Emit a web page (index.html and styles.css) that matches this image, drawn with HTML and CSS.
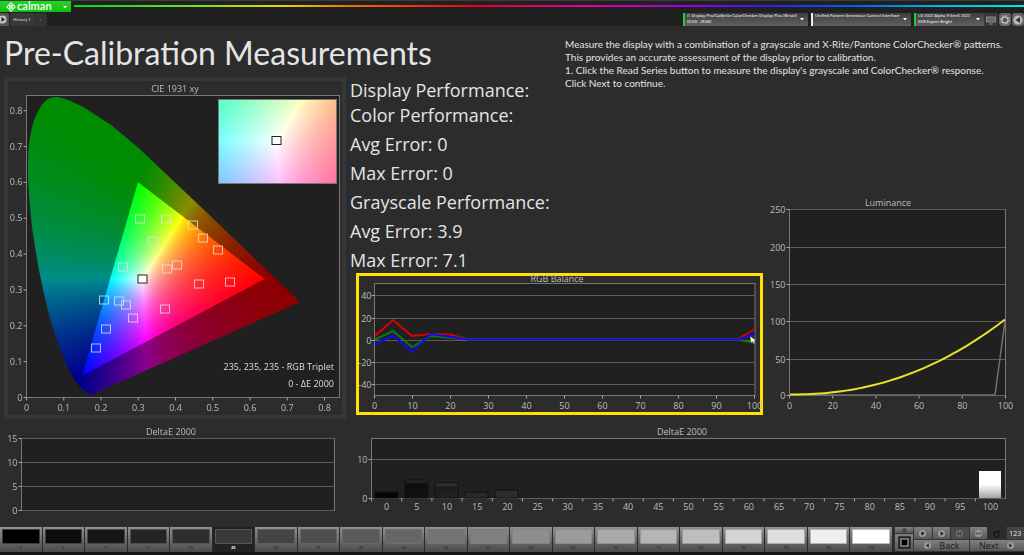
FILE: index.html
```html
<!DOCTYPE html>
<html lang="en">
<head>
<meta charset="utf-8">
<title>Calman - Pre-Calibration Measurements</title>
<link rel="stylesheet" href="styles.css">
</head>
<body>
<header class="topbar">
  <button class="brand" type="button" aria-label="calman menu">
    <svg class="brand-mark" viewBox="0 0 10 10" aria-hidden="true"><g transform="rotate(45 5 5)" fill="none" stroke="#e8ffe8" stroke-width="1"><rect x="2" y="2" width="2.5" height="2.5"/><rect x="5.5" y="2" width="2.5" height="2.5"/><rect x="2" y="5.5" width="2.5" height="2.5"/><rect x="5.5" y="5.5" width="2.5" height="2.5"/></g></svg>
    <span>calman</span>
    <svg class="arrow" viewBox="0 0 6 4" aria-hidden="true"><path d="M1 1h4L3 3.5z"/></svg>
  </button>
  <div class="rainbow"></div>
</header>
<nav class="toolbar">
  <button class="play" type="button" aria-label="Play"><svg viewBox="0 0 9 11"><circle cx="2.500" cy="5.500" r="4" fill="#c4c4c4"/><path d="M1.500 3v5L5 5.500z" fill="#222"/></svg></button>
  <button class="tab" type="button">History 1</button>
  <button class="tab tab-add" type="button" aria-label="Add tab">+</button>
  <div class="devices">
    <div class="device device-meter"><label for="meter">i1 Display Pro/Calibrite ColorChecker Display Plus (Retail)</label><select id="meter"><option>OLED - (RGB)</option></select><svg class="arrow" viewBox="0 0 6 4"><path d="M1 1h4L3 3.5z"/></svg></div>
    <div class="device device-source"><select aria-label="Pattern source"><option>Unified Pattern Generator Control Interface</option></select><svg class="arrow" viewBox="0 0 6 4"><path d="M1 1h4L3 3.5z"/></svg></div>
    <div class="device device-display"><label for="display">LG 2022 Alpha 9 Gen5 2022</label><select id="display"><option>SDR Expert Bright</option></select><svg class="arrow" viewBox="0 0 6 4"><path d="M1 1h4L3 3.5z"/></svg></div>
    <button class="tool tool-flat" type="button" aria-label="Screen"><svg viewBox="0 0 12 12"><rect x="1.500" y="3" width="9" height="5" fill="#666" stroke="#888"/><path d="M4 10h4" stroke="#888"/></svg></button>
    <button class="tool" type="button" aria-label="Settings"><svg viewBox="0 0 12 12"><circle cx="6" cy="6" r="3" fill="#555" stroke="#bbb" stroke-width="1.500"/><circle cx="6" cy="6" r="4.500" fill="none" stroke="#bbb" stroke-dasharray="1.500 2"/></svg></button>
    <button class="tool" type="button" aria-label="Previous"><svg viewBox="0 0 12 12"><circle cx="6" cy="6" r="4.500" fill="#bbb"/><path d="M8 3v6L3.500 6z" fill="#333"/></svg></button>
  </div>
</nav>
<main class="workspace">
  <h1 class="title">Pre-Calibration Measurements</h1>
  <div class="instructions">
    <p>Measure the display with a combination of a grayscale and X-Rite/Pantone ColorChecker® patterns.</p>
    <p>This provides an accurate assessment of the display prior to calibration.</p>
    <p>1. Click the Read Series button to measure the display's grayscale and ColorChecker® response.</p>
    <p>Click Next to continue.</p>
  </div>
  <section class="performance">
    <h2>Display Performance:</h2>
    <p>Color Performance:</p>
    <p>Avg Error: 0</p>
    <p>Max Error: 0</p>
    <p>Grayscale Performance:</p>
    <p>Avg Error: 3.9</p>
    <p>Max Error: 7.1</p>
  </section>
  <figure class="cie">
    <svg class="chart" viewBox="8 81 334 334" role="img" aria-label="CIE 1931 xy">
      <defs><clipPath id="locus"><path d="M91 395L87.500 393L84.600 390.700L79.900 386.400L76.800 382.700L72.500 376.300L67.100 365.900L60.300 349.400L51.900 325.100L47.500 309Q43.200 291.300 39 270Q35.100 249.100 32 227Q29.400 204 28.300 183Q27.200 162.300 29 145Q31 127 36 115.500Q42 102 48 99Q55 95.500 62 98Q69 100 76 103.500L84 107.500L111.800 125.500L138.600 148L165.200 173.200L191.700 198.200L217.200 222.600L240.500 245L259.800 263.500L274.200 277.300L283.800 286.500L299.900 301.900Z"/></clipPath></defs>
      <rect class="plot" x="26.500" y="95.500" width="313" height="302"/>
      <g clip-path="url(#locus)"><foreignObject x="26" y="95" width="314" height="303"><canvas id="gamut" class="gamut" width="628" height="606"></canvas></foreignObject></g>
      <foreignObject x="219" y="100" width="117" height="83"><canvas id="inset" class="gamut" width="117" height="83"></canvas></foreignObject>
      <rect class="inset-frame" x="218.500" y="99.500" width="118" height="84"/>
      <g id="cie-axes"></g>
      <g id="targets" class="targets"></g>
      <rect class="white-target" x="138" y="275" width="9" height="8"/>
      <rect class="inset-target" x="272" y="136.500" width="9" height="8"/>
      <text x="175" y="92" text-anchor="middle">CIE 1931 xy</text>
      <text class="bright" x="334" y="370" text-anchor="end">235, 235, 235 - RGB Triplet</text>
      <text class="bright" x="334" y="387" text-anchor="end">0 - ΔE 2000</text>
    </svg>
  </figure>
  <figure class="balance">
    <svg class="chart" viewBox="359 276 401 136" role="img" aria-label="RGB Balance">
      <rect class="plot" x="374.500" y="283.500" width="380.500" height="112"/>
      <g id="balance-axes"></g>
      <g class="series">
        <path stroke="#da0000" d="M375 336L393 320L412 336L431 334L450 334.500L469 339.500H737L755 329"/>
        <path stroke="#0c7a0c" d="M375 339.500L393 331L412 347L431 336L469 339.500H737L755 343"/>
        <path stroke="#0c0cef" d="M375 344L393 335.500L412 351.500L431 334L469 339.500H738L755 334"/>
      </g>
      <path d="M750 336l1 7 1.500-1.500 1.500 2.500 1-1-1-2 2-.5z" fill="#fff" stroke="#333" stroke-width=".4"/>
      <text x="557" y="282" text-anchor="middle">RGB Balance</text>
    </svg>
  </figure>
  <figure class="luminance">
    <svg class="chart" viewBox="765 195 259 222" role="img" aria-label="Luminance">
      <rect class="plot" x="789.500" y="209.500" width="216" height="186"/>
      <g id="luminance-axes"></g>
      <path d="M790 395H995L1005 321" fill="none" stroke="#707070" stroke-width="1.500"/>
      <path id="luminance-curve" fill="none" stroke="#e8e32a" stroke-width="2"/>
      <text x="888" y="206" text-anchor="middle">Luminance</text>
    </svg>
  </figure>
  <figure class="delta-color">
    <svg class="chart" viewBox="0 422 350 100" role="img" aria-label="DeltaE 2000, color">
      <rect class="plot" x="21.500" y="438.500" width="313" height="72"/>
      <g id="delta-color-axes"></g>
      <text x="171" y="435" text-anchor="middle">DeltaE 2000</text>
    </svg>
  </figure>
  <figure class="delta-gray">
    <svg class="chart" viewBox="350 422 674 100" role="img" aria-label="DeltaE 2000, grayscale">
      <defs>
        <linearGradient id="whiteBar" x2="0" y2="1"><stop offset=".5" stop-color="#fff"/><stop offset="1" stop-color="#a2a2a2"/></linearGradient>
        <linearGradient id="darkBar" x2="0" y2="1"><stop stop-color="#333"/><stop offset=".25" stop-color="#0e0e0e"/><stop offset="1" stop-color="#111"/></linearGradient>
        <linearGradient id="grayBar" x2="0" y2="1"><stop stop-color="#3e3e3e"/><stop offset=".3" stop-color="#1c1c1c"/><stop offset="1" stop-color="#222"/></linearGradient>
      </defs>
      <rect class="plot" x="371.500" y="438.500" width="634" height="60"/>
      <g id="delta-gray-axes"></g>
      <g stroke="#111">
        <rect x="375" y="492" width="23" height="6" fill="#050505"/>
        <rect x="405" y="480" width="23" height="18" fill="url(#darkBar)"/>
        <rect x="435" y="483" width="23" height="15" fill="url(#grayBar)"/>
        <rect x="465" y="492" width="23" height="6" fill="#292929"/>
        <rect x="495" y="490" width="23" height="8" fill="#2c2c2c"/>
      </g>
      <rect x="979" y="471" width="22" height="27" fill="url(#whiteBar)"/>
      <text x="682" y="435" text-anchor="middle">DeltaE 2000</text>
    </svg>
  </figure>
</main>
<footer class="footer">
  <div id="swatches" class="swatches"></div>
  <div class="side">
    <button class="key" type="button" aria-label="Eject"><svg viewBox="0 0 8 6"><circle cx="4" cy="3" r="2" fill="#444"/></svg></button>
    <button class="key key-stop" type="button" aria-label="Pattern window"><svg viewBox="0 0 14 14"><rect x="2" y="2" width="10" height="10" fill="#777" stroke="#1c1c1c" stroke-width="1.500"/><rect x="4.500" y="4.500" width="5" height="5" fill="#000"/></svg></button>
  </div>
  <div class="controls">
    <div class="keys">
      <button class="key" type="button" aria-label="Stop"><svg viewBox="0 0 10 10"><circle cx="5" cy="5" r="4" fill="#9a9a9a"/><path d="M3.500 3.500h3v3h-3z" fill="#222"/></svg></button>
      <button class="key" type="button" aria-label="Read"><svg viewBox="0 0 10 10"><circle cx="5" cy="5" r="4" fill="#9a9a9a"/><path d="M4 2.500v5L7.500 5z" fill="#222"/></svg></button>
      <button class="key key-dim" type="button" aria-label="Read series"><svg viewBox="0 0 10 10"><circle cx="5" cy="5" r="4" fill="#707070"/><path d="M3.500 3v4M6.500 3v4M3.500 5h3" stroke="#333"/></svg></button>
      <button class="key" type="button" aria-label="Read continuous"><svg viewBox="0 0 10 10"><circle cx="5" cy="5" r="4" fill="#9a9a9a"/><path d="M5 5C3 2.500 1 5 3 6 4 6.500 6 3.500 7 4c2 1 0 3.500-2 1z" fill="none" stroke="#333" stroke-width=".8"/></svg></button>
      <button class="key key-dark" type="button" aria-label="Repeat"><svg viewBox="0 0 10 10"><path d="M7 3.500A3 3 0 1 0 8 6M7.500 1.500v2.500h-2.500" fill="none" stroke="#171717" stroke-width="1.500"/></svg></button>
      <button class="key key-num" type="button">123</button>
    </div>
    <div class="steps">
      <button class="key step" type="button"><svg viewBox="0 0 10 10"><circle cx="5" cy="5" r="4" fill="#9a9a9a"/><path d="M6.500 2.500v5L3 5z" fill="#333"/></svg><span>Back</span></button>
      <button class="key step" type="button"><span>Next</span><svg viewBox="0 0 10 10"><circle cx="5" cy="5" r="4" fill="#9a9a9a"/><path d="M3.500 2.500v5L7 5z" fill="#333"/></svg></button>
    </div>
  </div>
</footer>
<script src="script.js"></script>
</body>
</html>
```
FILE: styles.css
```css
* { box-sizing: border-box; }
body {
  margin: 0;
  min-height: 100vh;
  display: flex;
  flex-direction: column;
  background: #2c2c2c;
  color: #e4e4e4;
  font-family: "Open Sans", "Noto Sans", sans-serif;
}
h1, h2, p, figure { margin: 0; font-weight: 400; }
button, select { border: 0; padding: 0; margin: 0; font-family: inherit; color: inherit; background: none; }
svg { display: block; }
.arrow { width: 6px; height: 4px; fill: #fff; flex: none; }

.topbar { display: flex; height: 13px; background: #202020; border-top: 1px solid #3c3c3c; align-items: flex-start; gap: 3px; }
.brand { display: flex; align-items: center; gap: 1px; width: 71px; height: 11px; padding: 0 3px 0 6px; background: linear-gradient(#25d325, #10c010); color: #e8ffe8; font: 700 11px/10px Lato, sans-serif; }
.brand span { flex: 1; text-align: left; padding-bottom: 2px; }
.brand-mark { width: 10px; height: 10px; }
.rainbow { flex: 1; height: 2px; margin-top: 4px; background: linear-gradient(90deg, #00d820, #70e020 12%, #e8d800 22%, #f07000 29%, #e80020 42%, #e000a0 54%, #a000e0 64%, #3020e8 73%, #0060f0 82%, #00b8e8 91%, #00e8e8); }

.toolbar { display: flex; height: 13px; background: #202020; align-items: stretch; }
.play { width: 9px; background: #555; border-radius: 0 3px 0 0; }
.play svg { width: 9px; height: 11px; }
.tab { width: 24px; background: #383838; color: #d0d0d0; font-size: 4px; font-weight: 600; margin-left: 1px; border-radius: 2px 2px 0 0; }
.tab-add { width: 13px; color: #777; margin-left: 0; background: #333; }
.devices { display: flex; margin-left: auto; }
.device { display: grid; grid-template-columns: minmax(0, 1fr) 6px; grid-template-rows: 6px 6px; align-items: center; margin-right: 3px; padding: 0 3px 0 2px; background: linear-gradient(#3e3e3e, #606060); border-left: 2px solid #20d030; color: #e0e0e0; font-size: 4px; line-height: 6px; font-weight: 600; }
.device label, .device select { grid-column: 1; white-space: nowrap; font-weight: 600; }
.device select { appearance: none; width: 100%; height: 6px; font-size: 4px; line-height: 6px; }
.device .arrow { grid-column: 2; grid-row: 1 / 3; }
.device-meter { width: 125px; }
.device-source { width: 100px; border-color: #eee; }
.device-display { width: 70px; margin-right: 0; }
.tool { width: 12px; background: #666; border-radius: 3px; margin-left: 1px; }
.tool svg { width: 12px; height: 12px; }
.tool-flat { width: 14px; background: #383838; border-radius: 0; padding-left: 1px; margin-left: 0; }

.workspace {
  display: grid;
  grid-template-columns: minmax(0, 350fr) minmax(0, 215fr) minmax(0, 200fr) minmax(0, 259fr);
  grid-template-rows: 51px auto auto auto;
}
.title { grid-column: 1 / 3; grid-row: 1; padding: 6px 0 0 4px; font: 400 32px/42px Lato, "Open Sans", sans-serif; white-space: nowrap; }
.instructions { grid-column: 3 / 5; grid-row: 1 / 3; padding-top: 12px; font-family: Lato, "Open Sans", sans-serif; font-size: 10px; line-height: 13px; white-space: nowrap; z-index: 1; }
.performance { grid-column: 2; grid-row: 2; font-size: 18px; line-height: 29px; padding-top: 1px; margin-bottom: -2px; white-space: nowrap; }
.performance h2 { font-size: 18px; line-height: 25px; }
.performance p:first-of-type { line-height: 25px; margin-bottom: 2px; }
.cie { grid-column: 1; grid-row: 2 / 4; margin: 0 4px; border: 4px solid #363636; align-self: start; }
.balance { grid-column: 2 / 4; grid-row: 3; margin: 0 2px 6px 6px; border: 3px solid #ffe000; align-self: end; }
.luminance { grid-column: 4; grid-row: 2 / 4; align-self: end; margin-bottom: 4px; }
.delta-color { grid-column: 1; grid-row: 4; margin-top: 1px; }
.delta-gray { grid-column: 2 / 5; grid-row: 4; margin-top: 1px; }

.chart { width: 100%; height: auto; overflow: hidden; }
.balance .chart { overflow: visible; }
.chart text { font-size: 9px; fill: #bcbcbc; }
.chart .bright { fill: #dedede; }
.plot { fill: #202020; stroke: #777; }
.grid { stroke: #5c5c5c; }
.tick { stroke: #a8a8a8; }
.gamut { display: block; width: 100%; height: 100%; }
.inset-frame { fill: none; stroke: #777; }
.targets rect { fill: none; stroke: #e4e4e4; stroke-opacity: .8; stroke-width: 1; }
.white-target { fill: #fff; stroke: #222; }
.inset-target { fill: none; stroke: #222; }
.series path { fill: none; stroke-width: 2; }

.footer { display: flex; margin-top: auto; height: 28px; border-bottom: 3px solid #151515; }
.swatches { flex: 1; display: grid; grid-template-columns: repeat(21, minmax(0, 1fr)); }
.swatch { display: flex; flex-direction: column; padding: 2px 2px 0; background: linear-gradient(#909090, #4a4a4a); border-right: 1px solid #2a2a2a; font-size: 4px; line-height: 7px; color: #1c1c1c; }
.swatch-color { width: 100%; height: 15px; border: 1px solid rgba(120, 120, 120, .5); border-radius: 1px; }
.swatch-label { width: 100%; text-align: center; }
.swatch[aria-pressed="true"] { background: #222; color: #fff; font-weight: 700; }
.side { width: 19px; display: grid; grid-template-rows: 7px 18px; margin-left: 1px; }
.controls { width: 111px; display: grid; grid-template-rows: 13px 12px; }
.keys { display: grid; grid-template-columns: repeat(6, minmax(0, 1fr)); }
.steps { display: grid; grid-template-columns: 1fr 1fr; }
.key { display: flex; align-items: center; justify-content: center; background: linear-gradient(#808080, #585858); border-left: 1px solid #333; border-bottom: 1px solid #333; }
.key svg { width: 9px; height: 9px; }
.key-stop svg { width: 15px; height: 15px; }
.key-dim { background: #4c4c4c; }
.key-dark { background: #2c2c2c; }
.key-num { background: #444; color: #e4e4e4; font-size: 7px; }
.step { gap: 7px; color: #1c1c1c; font-size: 9px; line-height: 10px; }
```
FILE: script.js
```js
const SVG = "http://www.w3.org/2000/svg";

function add(parent, name, attrs, text) {
  const el = document.createElementNS(SVG, name);
  for (const key in attrs) el.setAttribute(key, attrs[key]);
  if (text !== undefined) el.textContent = text;
  parent.appendChild(el);
}

function axes(id, o) {
  const g = document.getElementById(id);
  o.y.forEach(([label, y]) => {
    if (o.grid) add(g, "line", { class: "grid", x1: o.left, x2: o.right, y1: y, y2: y });
    add(g, "line", { class: "tick", x1: o.left - 3, x2: o.left, y1: y, y2: y });
    add(g, "text", { x: o.left - (o.gap || 4), y: y + 3, "text-anchor": "end" }, label);
  });
  (o.x || []).forEach(([label, x]) => {
    const shift = o.tickShift || 0;
    add(g, "line", { class: "tick", x1: x - shift, x2: x - shift, y1: o.bottom, y2: o.bottom + 3 });
    add(g, "text", { x, y: o.bottom + (o.drop || 13), "text-anchor": "middle" }, label);
  });
}

const range = n => Array.from({ length: n }, (_, i) => i);
const tenth = i => (i ? (i / 10).toFixed(1) : "0");

axes("cie-axes", {
  left: 26.5, bottom: 397.5, right: 339.5,
  y: range(9).map(i => [tenth(i), 397.5 - i * 35.85]),
  x: range(9).map(i => [tenth(i), 26.5 + i * 37.25])
});
axes("balance-axes", {
  left: 374.5, right: 755, bottom: 395.5, grid: true, gap: 3,
  y: [[40, 295.5], [20, 318.5], [0, 340.5], [-20, 362.5], [-40, 384.5]],
  x: range(11).map(i => [i * 10, 374.5 + i * 38])
});
axes("luminance-axes", {
  left: 789.5, right: 1005, bottom: 395.5, grid: true,
  y: [[250, 209.5], [200, 247.5], [150, 284.5], [100, 321.5], [50, 359.5], [0, 395.5]],
  x: range(6).map(i => [i * 20, 789.5 + i * 43.2])
});
axes("delta-color-axes", {
  left: 21.5, right: 334, grid: true,
  y: [[15, 438.5], [10, 462.5], [5, 486.5], [0, 510.5]]
});
axes("delta-gray-axes", {
  left: 371.5, right: 1005, bottom: 498.5, grid: true, drop: 11, tickShift: 15.1,
  y: [[10, 459.5], [0, 498.5]],
  x: range(21).map(i => [i * 5, 386.6 + i * 30.19])
});

document.getElementById("luminance-curve").setAttribute("d", range(51).map(i =>
  (i ? "L" : "M") + (790 + i * 4.3) + " " + (394.5 - 75 * Math.pow(i / 50, 2.2))).join(""));

[[140, 219], [166, 219], [193, 225], [203, 238], [218, 250], [153, 241], [123, 267],
 [167, 269], [177, 265], [199, 284], [230, 282], [104, 300], [119, 301], [126, 305],
 [133, 318], [165, 309], [106, 329], [96, 348]].forEach(([x, y]) =>
  add(document.getElementById("targets"), "rect", { x: x - 4.5, y: y - 4, width: 9, height: 8 }));

// Chromaticity to linear RGB, scaled so the strongest channel is full.
function colorAt(x, y, outside) {
  y = Math.max(y, 0.001);
  const X = x / y, Z = (1 - x - y) / y;
  const rgb = [
    3.2406 * X - 1.5372 - 0.4986 * Z,
    -0.9689 * X + 1.8758 + 0.0415 * Z,
    0.0557 * X - 0.204 + 1.057 * Z
  ];
  const top = Math.max(...rgb);
  const level = Math.min(...rgb) < 0 ? outside : 1;
  return rgb.map(v => 255 * level * Math.max(v, 0) / top);
}

function paint(id, toXY) {
  const canvas = document.getElementById(id);
  const ctx = canvas.getContext("2d");
  const image = ctx.createImageData(canvas.width, canvas.height);
  for (let j = 0, p = 0; j < canvas.height; j++) {
    for (let i = 0; i < canvas.width; i++, p += 4) {
      const [x, y] = toXY(i, j);
      image.data.set([...colorAt(x, y, 0.55), 255], p);
    }
  }
  ctx.putImageData(image, 0, 0);
}
paint("gamut", (i, j) => [i / 2 / 372.5, (302 - j / 2) / 358.5]);
paint("inset", (i, j) => [0.3127 + (i - 57.5) * 0.0007, 0.329 - (j - 41) * 0.0007]);

const grays = [0, 12, 23, 36, 46, 57, 68, 78, 90, 102, 116, 128, 142, 155, 170, 181, 190, 212, 222, 239, 255];
grays.forEach((v, i) => {
  const b = document.createElement("button");
  b.type = "button";
  b.className = "swatch";
  b.setAttribute("aria-pressed", i === 5);
  b.innerHTML = `<span class="swatch-color" style="background-color: rgb(${v}, ${v}, ${v})"></span><span class="swatch-label">${i * 5}</span>`;
  document.getElementById("swatches").appendChild(b);
});
```
